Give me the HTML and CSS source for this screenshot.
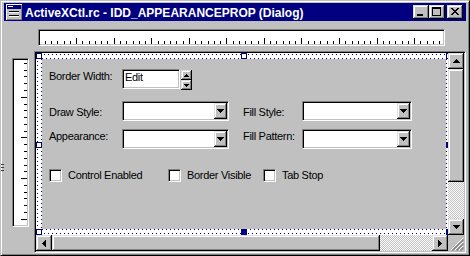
FILE: index.html
```html
<!DOCTYPE html>
<html>
<head>
<meta charset="utf-8">
<link rel="stylesheet" href="styles.css">
</head>
<body>
<div class="window">
  <div class="titlebar">
    <svg class="appicon" width="16" height="16" viewBox="0 0 16 16" shape-rendering="crispEdges">
      <rect x="0" y="0" width="16" height="16" fill="#fff"/>
      <rect x="1" y="1" width="15" height="15" fill="#808080"/>
      <rect x="1" y="1" width="14" height="14" fill="#c0c0c0"/>
      <rect x="1" y="1" width="14" height="4" fill="#000080"/>
      <rect x="2" y="2" width="5" height="1" fill="#fff"/>
      <rect x="3" y="7" width="10" height="1" fill="#000"/>
      <rect x="3" y="8" width="10" height="1" fill="#fff"/>
      <rect x="3" y="11" width="10" height="1" fill="#000"/>
      <rect x="3" y="12" width="10" height="1" fill="#fff"/>
    </svg>
    <span class="title">ActiveXCtl.rc - IDD_APPEARANCEPROP (Dialog)</span>
    <div class="caption-buttons">
      <div class="cap-btn raised">
        <svg width="16" height="14" viewBox="0 0 16 14" shape-rendering="crispEdges"><rect x="4" y="9" width="6" height="2" fill="#000"/></svg>
      </div>
      <div class="cap-btn raised">
        <svg width="16" height="14" viewBox="0 0 16 14" shape-rendering="crispEdges"><path fill="#000" fill-rule="evenodd" d="M3 2h9v9h-9zM4 4v6h7v-6z"/></svg>
      </div>
      <div class="cap-btn raised close">
        <svg width="16" height="14" viewBox="0 0 16 14" shape-rendering="crispEdges"><path fill="#000" d="M4 3h2v1h-2zM10 3h2v1h-2zM5 4h2v1h-2zM9 4h2v1h-2zM6 5h4v1h-4zM7 6h2v1h-2zM6 7h4v1h-4zM5 8h2v1h-2zM9 8h2v1h-2zM4 9h2v1h-2zM10 9h2v1h-2z"/></svg>
      </div>
    </div>
  </div>

  <div class="client">
    <div class="hruler sunken">
      <svg class="ticks" width="403" height="13" viewBox="0 0 403 13" shape-rendering="crispEdges">
        <path stroke="#000" stroke-width="1" d="M5.5 10v3M11.5 10v3M17.5 10v3M24.5 10v3M30.5 10v3M42.5 10v3M49.5 10v3M55.5 10v3M61.5 10v3M67.5 10v3M80.5 10v3M86.5 10v3M93.5 10v3M99.5 10v3M105.5 10v3M118.5 10v3M124.5 10v3M130.5 10v3M136.5 10v3M143.5 10v3M155.5 10v3M161.5 10v3M168.5 10v3M174.5 10v3M180.5 10v3M193.5 10v3M199.5 10v3M205.5 10v3M211.5 10v3M218.5 10v3M230.5 10v3M236.5 10v3M243.5 10v3M249.5 10v3M255.5 10v3M268.5 10v3M274.5 10v3M280.5 10v3M287.5 10v3M293.5 10v3M305.5 10v3M312.5 10v3M318.5 10v3M324.5 10v3M330.5 10v3M343.5 10v3M349.5 10v3M355.5 10v3M362.5 10v3M368.5 10v3M380.5 10v3M387.5 10v3M393.5 10v3M399.5 10v3"/>
        <path stroke="#000" stroke-width="1" d="M36.5 7v6M74.5 7v6M111.5 7v6M149.5 7v6M186.5 7v6M224.5 7v6M261.5 7v6M299.5 7v6M337.5 7v6M374.5 7v6"/>
      </svg>
    </div>

    <div class="workarea">
      <div class="vruler sunken">
        <svg class="ticks" width="13" height="165" viewBox="0 0 13 165" shape-rendering="crispEdges">
          <path stroke="#000" stroke-width="1" d="M10 3.5h3M10 10.5h3M10 16.5h3M10 23.5h3M10 30.5h3M10 44.5h3M10 50.5h3M10 57.5h3M10 64.5h3M10 71.5h3M10 84.5h3M10 91.5h3M10 98.5h3M10 105.5h3M10 111.5h3M10 125.5h3M10 132.5h3M10 138.5h3M10 145.5h3M10 152.5h3"/>
          <path stroke="#000" stroke-width="1" d="M7 37.5h6M7 77.5h6M7 118.5h6M7 159.5h6"/>
        </svg>
      </div>

      <div class="view">
        <div class="canvas">
          <div class="dialog">
            <div class="form-row">
              <span class="lbl col1 pad1">Border Width:</span>
              <div class="edit field">Edit</div>
              <div class="spin">
                <div class="spin-btn raised">
                  <svg width="5" height="3" viewBox="0 0 5 3" shape-rendering="crispEdges"><path fill="#000" d="M2 0h1v1h1v1h1v1h-5v-1h1v-1h1z"/></svg>
                </div>
                <div class="spin-btn raised">
                  <svg width="5" height="3" viewBox="0 0 5 3" shape-rendering="crispEdges"><path fill="#000" d="M0 0h5v1h-1v1h-1v1h-1v-1h-1v-1h-1z"/></svg>
                </div>
              </div>
            </div>

            <div class="form-row row-draw">
              <span class="lbl col1 pad5">Draw Style:</span>
              <div class="combo field combo-left">
                <div class="drop raised">
                  <svg width="7" height="4" viewBox="0 0 7 4" shape-rendering="crispEdges"><path fill="#000" d="M0 0h7v1h-1v1h-1v1h-1v1h-1v-1h-1v-1h-1v-1h-1z"/></svg>
                </div>
              </div>
              <span class="lbl col2 pad5">Fill Style:</span>
              <div class="combo field combo-right">
                <div class="drop raised">
                  <svg width="7" height="4" viewBox="0 0 7 4" shape-rendering="crispEdges"><path fill="#000" d="M0 0h7v1h-1v1h-1v1h-1v1h-1v-1h-1v-1h-1v-1h-1z"/></svg>
                </div>
              </div>
            </div>

            <div class="form-row row-appear">
              <span class="lbl col1 pad1">Appearance:</span>
              <div class="combo field combo-left">
                <div class="drop raised">
                  <svg width="7" height="4" viewBox="0 0 7 4" shape-rendering="crispEdges"><path fill="#000" d="M0 0h7v1h-1v1h-1v1h-1v1h-1v-1h-1v-1h-1v-1h-1z"/></svg>
                </div>
              </div>
              <span class="lbl col2 pad1">Fill Pattern:</span>
              <div class="combo field combo-right">
                <div class="drop raised">
                  <svg width="7" height="4" viewBox="0 0 7 4" shape-rendering="crispEdges"><path fill="#000" d="M0 0h7v1h-1v1h-1v1h-1v1h-1v-1h-1v-1h-1v-1h-1z"/></svg>
                </div>
              </div>
            </div>

            <div class="checks">
              <label class="check"><span class="box field"></span><span class="lbl">Control Enabled</span></label>
              <label class="check"><span class="box field"></span><span class="lbl">Border Visible</span></label>
              <label class="check"><span class="box field"></span><span class="lbl">Tab Stop</span></label>
            </div>

            <div class="band band-top"></div>
            <div class="band band-bottom"></div>
            <div class="band band-left"></div>
            <div class="band band-right"></div>
            <div class="handle h-tl"></div>
            <div class="handle h-tm"></div>
            <div class="handle h-tr"></div>
            <div class="handle h-ml"></div>
            <div class="handle h-bl"></div>
            <div class="handle filled h-mr"></div>
            <div class="handle filled h-bm"></div>
            <div class="handle filled h-br"></div>
          </div>
        </div>

        <div class="vscroll">
          <div class="sbtn raised">
            <svg width="7" height="4" viewBox="0 0 7 4" shape-rendering="crispEdges"><path fill="#000" d="M3 0h1v1h1v1h1v1h1v1h-7v-1h1v-1h1v-1h1z"/></svg>
          </div>
          <div class="thumb-v raised"></div>
          <div class="track"></div>
          <div class="sbtn raised">
            <svg width="7" height="4" viewBox="0 0 7 4" shape-rendering="crispEdges"><path fill="#000" d="M0 0h7v1h-1v1h-1v1h-1v1h-1v-1h-1v-1h-1v-1h-1z"/></svg>
          </div>
        </div>

        <div class="hscroll">
          <div class="sbtn raised">
            <svg width="4" height="7" viewBox="0 0 4 7" shape-rendering="crispEdges"><path fill="#000" d="M3 0h1v7h-1v-1h-1v-1h-1v-1h-1v-1h1v-1h1v-1h1z"/></svg>
          </div>
          <div class="thumb-h raised"></div>
          <div class="track"></div>
          <div class="sbtn raised">
            <svg width="4" height="7" viewBox="0 0 4 7" shape-rendering="crispEdges"><path fill="#000" d="M0 0h1v1h1v1h1v1h1v1h-1v1h-1v1h-1v1h-1z"/></svg>
          </div>
        </div>

        <div class="grip">
          <svg width="16" height="16" viewBox="0 0 16 16">
            <path stroke="#fff" stroke-width="1" d="M3 15L15 3M7 15L15 7M11 15L15 11"/>
            <path stroke="#808080" stroke-width="1.4" d="M4.5 15.5L15.5 4.5M8.5 15.5L15.5 8.5M12.5 15.5L15.5 12.5"/>
          </svg>
        </div>
      </div>
    </div>
  </div>
  <div class="edge-marks"></div>
</div>
</body>
</html>
```

FILE: styles.css
```css
* {
  box-sizing: border-box;
  margin: 0;
  padding: 0;
}

html, body {
  width: 470px;
  height: 256px;
  overflow: hidden;
  background: #c0c0c0;
}

body {
  font-family: "Liberation Sans", Arial, sans-serif;
  font-size: 11px;
  color: #000;
}

svg {
  display: block;
}

/* ---------- window frame ---------- */
.window {
  position: relative;
  width: 470px;
  height: 256px;
  background: #c0c0c0;
  border: 1px solid;
  border-color: #c0c0c0 #000 #000 #c0c0c0;
  box-shadow: inset 1px 1px #fff, inset -1px -1px #808080;
  padding: 2px 3px 2px 3px;
  display: flex;
  flex-direction: column;
}

.edge-marks {
  position: absolute;
  left: 0;
  top: 163px;
  width: 3px;
  height: 8px;
  background: repeating-linear-gradient(180deg, #404040 0 1px, transparent 1px 3px);
}

.raised {
  background: #c0c0c0;
  box-shadow: inset -1px -1px #000, inset 1px 1px #dfdfdf, inset -2px -2px #808080, inset 2px 2px #fff;
}

.sunken {
  border: 1px solid;
  border-color: #808080 #fff #fff #808080;
  padding: 1px;
  box-shadow: inset 1px 1px #000, inset -1px -1px #c0c0c0;
}

/* ---------- title bar ---------- */
.titlebar {
  height: 18px;
  flex: 0 0 18px;
  background: #000080;
  color: #fff;
  display: flex;
  align-items: flex-start;
}

.appicon {
  margin: 1px 3px 0 2px;
  flex: 0 0 16px;
}

.title {
  flex: 1;
  font-weight: bold;
  font-size: 12px;
  line-height: 14px;
  margin-top: 3px;
  white-space: nowrap;
  overflow: hidden;
}

.caption-buttons {
  display: flex;
  margin: 2px 3px 0 0;
}

.cap-btn {
  width: 16px;
  height: 14px;
}

.cap-btn.close {
  margin-left: 2px;
}

/* ---------- client ---------- */
.client {
  flex: 1;
  display: flex;
  flex-direction: column;
}

.hruler {
  width: 407px;
  height: 17px;
  margin: 8px 0 0 34px;
  background: #fff;
}

.workarea {
  display: flex;
  margin-top: 5px;
  height: 202px;
}

.vruler {
  width: 17px;
  height: 169px;
  margin: 7px 5px 0 8px;
  background: #fff;
  flex: 0 0 17px;
}

.view {
  width: 432px;
  height: 202px;
  border: 1px solid;
  border-color: #808080 #fff #fff #808080;
  padding: 1px;
  box-shadow: inset 1px 1px #000, inset -1px -1px #c0c0c0;
  display: grid;
  grid-template-columns: 412px 16px;
  grid-template-rows: 182px 16px;
}

.canvas {
  overflow: hidden;
  background: #c0c0c0;
  position: relative;
}

/* ---------- dialog template ---------- */
.dialog {
  position: relative;
  width: 416px;
  height: 182px;
  padding: 16px 0 0 13px;
}

.form-row {
  display: flex;
  align-items: flex-start;
  height: 20px;
}

.row-draw {
  margin-top: 12px;
}

.row-appear {
  margin-top: 8px;
}

.lbl {
  line-height: 13px;
  letter-spacing: -0.3px;
  white-space: nowrap;
}

.col1 {
  width: 73px;
}

.col2 {
  width: 59px;
  margin-left: 14px;
}

.pad1 {
  padding-top: 1px;
}

.pad5 {
  padding-top: 5px;
}

.field {
  background: #fff;
  border: 1px solid;
  border-color: #808080 #fff #fff #808080;
  box-shadow: inset 1px 1px #000, inset -1px -1px #c0c0c0;
}

.edit {
  width: 58px;
  height: 20px;
  padding: 1px 1px 0 2px;
  line-height: 13px;
  letter-spacing: -0.3px;
}

.spin {
  margin: 1px 0 0 1px;
  width: 11px;
  display: flex;
  flex-direction: column;
}

.spin-btn {
  height: 10px;
  display: flex;
  align-items: center;
  justify-content: center;
}

.combo {
  height: 20px;
  padding: 1px;
  display: flex;
  justify-content: flex-end;
}

.combo-left {
  width: 107px;
}

.combo-right {
  width: 110px;
}

.drop {
  width: 13px;
  height: 16px;
  display: flex;
  align-items: center;
  justify-content: center;
}

.checks {
  margin-top: 20px;
  display: grid;
  grid-template-columns: 119px 95px auto;
}

.check {
  display: flex;
  align-items: flex-start;
  gap: 6px;
}

.box {
  display: block;
  width: 13px;
  height: 13px;
  flex: 0 0 13px;
}

/* selection frame (overlay) */
.band {
  position: absolute;
  background-color: #fff;
}

.band-top,
.band-bottom {
  left: 0;
  width: 100%;
  height: 6px;
  background-image:
    repeating-linear-gradient(90deg, #000080 0 1px, transparent 1px 4px),
    repeating-linear-gradient(90deg, #000080 0 1px, transparent 1px 4px);
  background-size: 100% 1px, 100% 1px;
  background-repeat: repeat-x;
}

.band-top {
  top: 0;
  background-position: 0 1px, 2px 5px;
}

.band-bottom {
  bottom: 0;
  background-position: 2px 0, 0 4px;
}

.band-left,
.band-right {
  top: 0;
  height: 100%;
  width: 6px;
  background-image:
    repeating-linear-gradient(180deg, #000080 0 1px, transparent 1px 4px),
    repeating-linear-gradient(180deg, #000080 0 1px, transparent 1px 4px);
  background-size: 1px 100%, 1px 100%;
  background-repeat: repeat-y;
}

.band-left {
  left: 0;
  background-position: 1px 0, 5px 2px;
}

.band-right {
  right: 0;
  background-position: 0 2px, 4px 0;
}

.handle {
  position: absolute;
  width: 6px;
  height: 6px;
  border: 1px solid #000080;
  background: #fff;
}

.handle.filled {
  background: #000080;
}

.h-tl { left: 0; top: 0; }
.h-tm { left: 205px; top: 0; }
.h-tr { right: 0; top: 0; }
.h-ml { left: 0; top: 89px; }
.h-mr { right: 0; top: 89px; }
.h-bl { left: 0; bottom: 0; }
.h-bm { left: 205px; bottom: 0; }
.h-br { right: 0; bottom: 0; }

/* ---------- scrollbars ---------- */
.vscroll {
  display: flex;
  flex-direction: column;
}

.hscroll {
  display: flex;
}

.sbtn {
  width: 16px;
  height: 16px;
  flex: 0 0 16px;
  display: flex;
  align-items: center;
  justify-content: center;
}

.thumb-v {
  flex: 0 0 113px;
}

.thumb-h {
  flex: 0 0 328px;
}

.track {
  flex: 1;
  background: repeating-conic-gradient(#fff 0 25%, #c0c0c0 0 50%) 0 0 / 2px 2px;
}

.grip {
  background: #c0c0c0;
}
```
